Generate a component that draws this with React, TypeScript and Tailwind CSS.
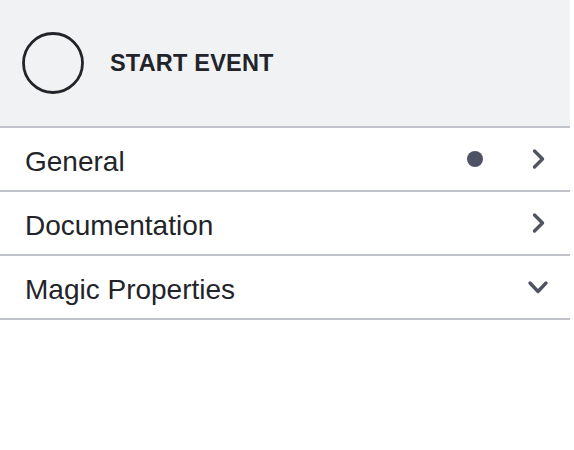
import React from 'react';

type Group = { label: string; open?: boolean; dirty?: boolean };

const groups: Group[] = [
  { label: 'General', dirty: true },
  { label: 'Documentation' },
  { label: 'Magic Properties', open: true },
];

function Chevron({ open }: { open?: boolean }) {
  return (
    <svg width="24" height="24" viewBox="0 0 24 24" className="text-[#505360]">
      {open ? (
        <path d="M4 8 L12 16.5 L20 8" fill="none" stroke="currentColor" strokeWidth="3.4" strokeLinecap="round" strokeLinejoin="round" />
      ) : (
        <path d="M8.5 4 L16.5 12 L8.5 20" fill="none" stroke="currentColor" strokeWidth="3.4" strokeLinecap="round" strokeLinejoin="round" />
      )}
    </svg>
  );
}

export default function App() {
  return (
    <div className="w-[570px] bg-white font-['Liberation_Sans',Arial,sans-serif] text-[#22242a]">
      {/* header */}
      <div className="h-[126px] bg-[#f1f2f4] flex items-center pl-[21px] gap-[25px]">
        <svg width="64" height="64" viewBox="0 0 64 64">
          <circle cx="32" cy="32" r="29.5" fill="none" stroke="#22242a" strokeWidth="2.8" />
        </svg>
        <span className="text-[23.5px] font-bold tracking-[0.2px] mt-[2px]">START EVENT</span>
      </div>
      <div className="h-[2px] bg-[#c1c3ca]" />

      {groups.map((g) => (
        <div key={g.label}>
          <div className="h-[62px] flex items-center pl-[25px] pr-[20px]">
            <span className="text-[28px] flex-1 mt-[6px]">{g.label}</span>
            {g.dirty && <span className="w-[16px] h-[16px] rounded-full bg-[#4e5264] mr-[43px]" />}
            <Chevron open={g.open} />
          </div>
          <div className="h-[2px] bg-[#c1c3ca]" />
        </div>
      ))}
    </div>
  );
}
